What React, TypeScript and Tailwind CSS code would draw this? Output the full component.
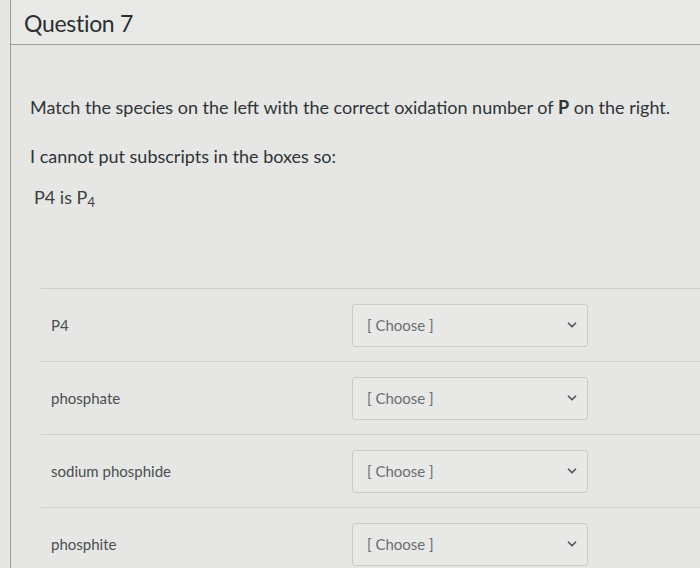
import { ChevronDown } from "lucide-react"

const rows = ["P4", "phosphate", "sodium phosphide", "phosphite"]

export default function App() {
  return (
    <div
      className="w-[700px] h-[568px] overflow-hidden bg-[#e6e7e4] text-[#2f3437]"
      style={{ fontFamily: "Lato, 'Open Sans', sans-serif" }}
    >
      <div className="ml-[10px] h-full border-l border-[#9a9c9a] flex flex-col">
        {/* header */}
        <div className="shrink-0 h-[45px] border-b border-[#9c9e9c] bg-[#e9eae7] flex items-start pl-[13px] pt-[9px]">
          <h2 className="text-[23px] leading-[28px] text-[#2b2f32] tracking-[-0.3px]">Question 7</h2>
        </div>

        {/* body */}
        <div className="shrink-0 pl-[19px] pt-[50px] text-[18px] leading-[24px]">
          <p className="whitespace-nowrap">
            Match the species on the left with the correct oxidation number of <b className="font-bold">P</b> on
            the right.
          </p>
          <p className="mt-[25px]">I cannot put subscripts in the boxes so:</p>
          <p className="mt-[17px] pl-[4px] text-[#3a3e41]">
            P4 is P<sub className="text-[13px]">4</sub>
          </p>
        </div>

        <div className="shrink-0 mt-[79px] ml-[30px] flex flex-col">
          {rows.map((r) => (
            <div key={r} className="shrink-0 h-[73px] border-t border-[#cfd0cd] flex items-center">
              <div className="w-[311px] pl-[10px] text-[15px] text-[#4a4e51]">{r}</div>
              <div className="w-[236px] h-[43px] border border-[#cbccc9] rounded-[3px] bg-[#e8e9e6] flex items-center justify-between pl-[14px] pr-[8px]">
                <span className="text-[15px] text-[#6b6e70]">[ Choose ]</span>
                <ChevronDown className="w-[14px] h-[14px] text-[#555]" strokeWidth={3} />
              </div>
            </div>
          ))}
        </div>
      </div>
    </div>
  )
}
